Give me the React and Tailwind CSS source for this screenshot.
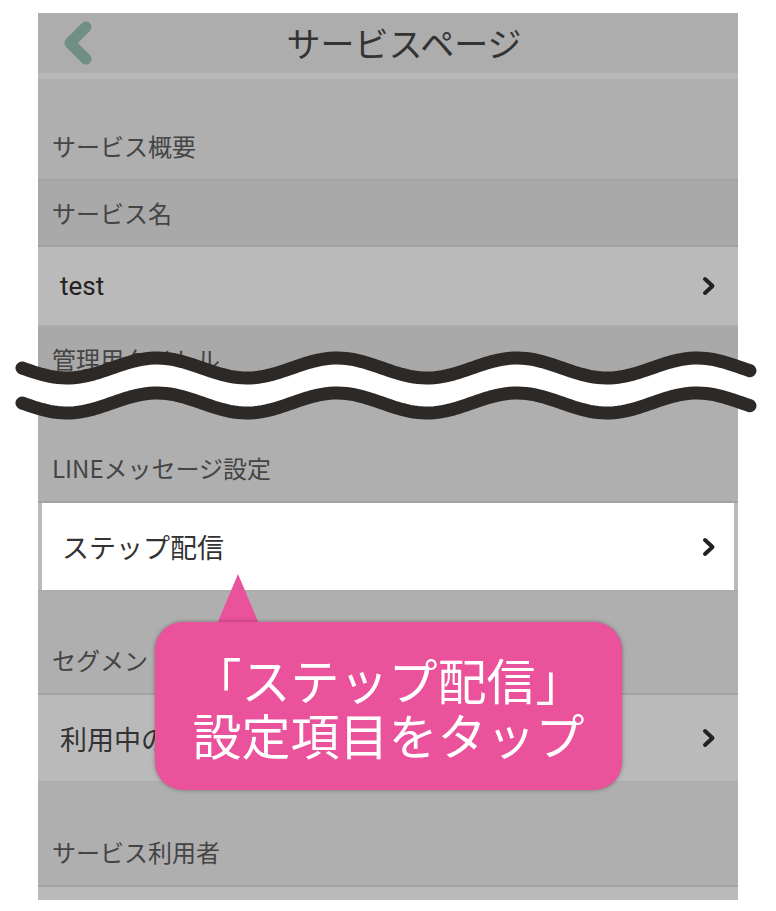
/**
 * App — サービスページ tutorial screenshot: settings list with a break mark and a callout
 */

const JP = "font-['Noto_Sans_CJK_JP',sans-serif]";

// build a wavy line as a list of points
const wavePoints = (center, from = 22, to = 752, period = 180, amp = 10) => {
  const pts = [];
  for (let x = from; x <= to; x += 4) {
    const y = center + amp * Math.sin((2 * Math.PI * (x - from)) / period);
    pts.push([x, +y.toFixed(2)]);
  }
  return pts;
};

const toPath = (pts) => pts.map(([x, y], i) => `${i ? 'L' : 'M'}${x} ${y}`).join(' ');

const Chevron = () => (
  <svg width="14" height="20" viewBox="0 0 14 20" className="shrink-0">
    <path d="M3 3 L10.5 10 L3 17" fill="none" stroke="#222" strokeWidth="4" strokeLinecap="round" strokeLinejoin="round" />
  </svg>
);

const SectionHeader = ({ label, className }) => (
  <div className={`flex items-end pb-[20px] pl-[14px] bg-[#afafaf] border-b-2 border-[#a2a2a2] ${className}`}>
    <span className={`${JP} text-[24px] leading-[26px] text-[#444]`}>{label}</span>
  </div>
);

const LabelRow = ({ label }) => (
  <div className="flex items-center h-[66px] pl-[14px] bg-[#a9a9a9] border-b-2 border-[#a2a2a2]">
    <span className={`${JP} text-[24px] leading-[26px] text-[#444]`}>{label}</span>
  </div>
);

const ValueRow = ({ children, className }) => (
  <div className={`flex items-center justify-between pl-[22px] pr-[22px] bg-[#bababa] border-b-2 border-[#adadad] ${className}`}>
    {children}
    <Chevron />
  </div>
);

const App = () => {
  const top = wavePoints(38);
  const bottom = wavePoints(73);
  const band = `${toPath(top)} ${[...bottom].reverse().map(([x, y]) => `L${x} ${y}`).join(' ')} Z`;

  return (
    <div className="relative w-[776px] h-[911px] bg-white overflow-hidden">
      {/* phone screen */}
      <div className="ml-[38px] mt-[13px] w-[700px] h-[887px] overflow-hidden bg-[#afafaf]">
        {/* nav bar */}
        <div className="relative flex items-center justify-center h-[60px] bg-[#adadad]">
          <svg width="32" height="46" viewBox="0 0 32 46" className="absolute left-[25px] top-[8px]">
            <path d="M23 6 L7 22 L23 38" fill="none" stroke="#6f8f85" strokeWidth="11" strokeLinecap="round" strokeLinejoin="round" />
          </svg>
          <span className={`${JP} pl-[32px] text-[34px] leading-none text-[#333]`}>サービスページ</span>
        </div>
        <div className="h-[6px] bg-[#b9b9b9]" />

        <SectionHeader label="サービス概要" className="h-[102px]" />
        <LabelRow label="サービス名" />
        <ValueRow className="h-[80px]">
          <span className="font-['Roboto',sans-serif] text-[26px] leading-none text-[#222]">test</span>
        </ValueRow>
        <LabelRow label="管理用タイトル" />

        <SectionHeader label="LINEメッセージ設定" className="h-[110px]" />
        <div className="h-[89px] px-[4px] bg-[#bababa] border-b-2 border-[#adadad]">
          <div className="flex items-center justify-between h-full pl-[20px] pr-[18px] bg-white">
            <span className={`${JP} text-[27px] leading-none text-[#333]`}>ステップ配信</span>
            <Chevron />
          </div>
        </div>

        <SectionHeader label="セグメント" className="h-[103px]" />
        <ValueRow className="h-[88px]">
          <span className={`${JP} text-[27px] leading-none text-[#333]`}>利用中のセグメント</span>
        </ValueRow>

        <SectionHeader label="サービス利用者" className="h-[104px]" />
        <div className="h-[60px] bg-[#bababa]" />
      </div>

      {/* break mark */}
      <svg width="776" height="90" viewBox="0 0 776 90" className="absolute left-0 top-[330px]">
        <path d={band} fill="#fff" />
        <path d={toPath(top)} fill="none" stroke="#2d2926" strokeWidth="13" strokeLinecap="round" strokeLinejoin="round" />
        <path d={toPath(bottom)} fill="none" stroke="#2d2926" strokeWidth="13" strokeLinecap="round" strokeLinejoin="round" />
      </svg>

      {/* callout */}
      <svg width="50" height="52" viewBox="0 0 50 52" className="absolute left-[213px] top-[572px]">
        <polygon points="25,2 4,52 46,52" fill="#ea529b" />
      </svg>
      <div className="absolute left-[155px] top-[622px] w-[467px] h-[168px] flex flex-col items-center justify-center rounded-[28px] bg-[#ea529b] shadow-[0_0_4px_rgba(0,0,0,0.35)]">
        <span className={`${JP} text-[49px] leading-[55px] text-white`}>「ステップ配信」</span>
        <span className={`${JP} text-[49px] leading-[55px] text-white`}>設定項目をタップ</span>
      </div>
    </div>
  );
};

export default App;
